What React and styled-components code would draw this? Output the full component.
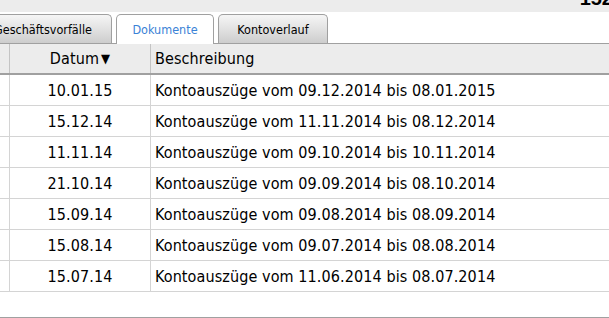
import React from 'react'
import styled, { createGlobalStyle } from 'styled-components'

const GlobalStyle = createGlobalStyle`
  html, body {
    margin: 0;
    padding: 0;
    background: #ffffff;
    overflow: hidden;
  }
`

const Page = styled.div`
  width: 609px;
  height: 318px;
  display: flex;
  flex-direction: column;
  overflow: hidden;
  font-family: 'DejaVu Sans Condensed', 'DejaVu Sans', sans-serif;
  color: #000;
`

const TopBar = styled.div`
  height: 12px;
  flex: 0 0 12px;
  background: #ececec;
  display: flex;
  justify-content: flex-end;
  align-items: flex-end;
  overflow: hidden;
`

const Counter = styled.span`
  font-family: 'Liberation Sans', sans-serif;
  font-weight: 700;
  font-size: 20px;
  line-height: 20px;
  margin-bottom: 4px;
  margin-right: -4px;
  color: #000;
`

const TabBar = styled.div`
  height: 32px;
  flex: 0 0 32px;
  box-sizing: border-box;
  display: flex;
  align-items: flex-end;
  gap: 4px;
  margin-left: -26px;
  border-bottom: 1px solid #a0a0a0;
  background: #fff;
`

const Tab = styled.div`
  box-sizing: border-box;
  width: ${p => p.$width}px;
  height: ${p => (p.$active ? 30 : 29)}px;
  margin-bottom: ${p => (p.$active ? -1 : 0)}px;
  padding-bottom: ${p => (p.$active ? 1 : 0)}px;
  border: 1px solid #a0a0a0;
  border-bottom: none;
  border-radius: 5px 5px 0 0;
  background: ${p => (p.$active ? '#ffffff' : 'linear-gradient(#f6f6f6, #cdcdcd)')};
  color: ${p => (p.$active ? '#3a82d6' : '#000')};
  font-size: 12.5px;
  display: flex;
  align-items: center;
  justify-content: center;
`

const Grid = styled.div`
  display: grid;
  grid-template-columns: 10px 141px 1fr;
`

const HeaderRow = styled(Grid)`
  height: 31px;
  flex: 0 0 31px;
  box-sizing: border-box;
  background: #ececec;
  border-bottom: 2px solid #a0a0a0;
`

const Row = styled(Grid)`
  height: 31px;
  flex: 0 0 31px;
  box-sizing: border-box;
  border-bottom: 1px solid #d4d4d4;
`

const Cell = styled.div`
  display: flex;
  align-items: center;
  justify-content: ${p => (p.$center ? 'center' : 'flex-start')};
  padding-left: ${p => (p.$center ? 0 : 4)}px;
  border-right: ${p => (p.$last ? 'none' : `1px solid ${p.$head ? '#c4c4c4' : '#d4d4d4'}`)};
  font-size: 16px;
  letter-spacing: 0.1px;
  white-space: nowrap;
`

const SortArrow = styled.span`
  font-size: 13px;
  margin-left: 2px;
`

const Filler = styled.div`
  flex: 1;
  border-bottom: 1px solid #a0a0a0;
`

const docs = [
  ['10.01.15', '09.12.2014', '08.01.2015'],
  ['15.12.14', '11.11.2014', '08.12.2014'],
  ['11.11.14', '09.10.2014', '10.11.2014'],
  ['21.10.14', '09.09.2014', '08.10.2014'],
  ['15.09.14', '09.08.2014', '08.09.2014'],
  ['15.08.14', '09.07.2014', '08.08.2014'],
  ['15.07.14', '11.06.2014', '08.07.2014'],
]

export default function App() {
  return (
    <Page>
      <GlobalStyle />
      <TopBar>
        <Counter>152</Counter>
      </TopBar>
      <TabBar>
        <Tab $width={138}>Geschäftsvorfälle</Tab>
        <Tab $width={98} $active>Dokumente</Tab>
        <Tab $width={110}>Kontoverlauf</Tab>
      </TabBar>
      <HeaderRow>
        <Cell $head />
        <Cell $head $center>
          Datum<SortArrow>▼</SortArrow>
        </Cell>
        <Cell $head $last>Beschreibung</Cell>
      </HeaderRow>
      {docs.map(([date, from, to]) => (
        <Row key={date}>
          <Cell />
          <Cell $center>{date}</Cell>
          <Cell $last>
            Kontoauszüge vom {from} bis {to}
          </Cell>
        </Row>
      ))}
      <Filler />
    </Page>
  )
}
